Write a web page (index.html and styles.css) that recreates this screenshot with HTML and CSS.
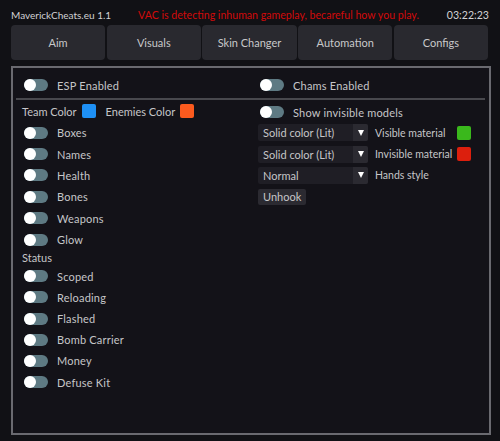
FILE: index.html
```html
<!DOCTYPE html>
<html>
<head>
<meta charset="utf-8">
<link rel="stylesheet" href="styles.css">
</head>
<body>
<div class="app">
  <div class="top">
    <span class="title">MaverickCheats.eu 1.1</span>
    <span class="warn">VAC is detecting inhuman gameplay, becareful how you play.</span>
    <span class="time">03:22:23</span>
  </div>
  <div class="tabs">
    <div class="tab">Aim</div>
    <div class="tab">Visuals</div>
    <div class="tab">Skin Changer</div>
    <div class="tab">Automation</div>
    <div class="tab">Configs</div>
  </div>
  <div class="panel">
    <div class="col left">
      <div class="head"><span class="toggle"></span><span class="lbl">ESP Enabled</span></div>
      <div class="sep"></div>
      <div class="colors">
        <span>Team Color</span><span class="sw blue"></span>
        <span class="gap">Enemies Color</span><span class="sw orange"></span>
      </div>
      <div class="row"><span class="toggle"></span><span class="lbl">Boxes</span></div>
      <div class="row"><span class="toggle"></span><span class="lbl">Names</span></div>
      <div class="row"><span class="toggle"></span><span class="lbl">Health</span></div>
      <div class="row"><span class="toggle"></span><span class="lbl">Bones</span></div>
      <div class="row"><span class="toggle"></span><span class="lbl">Weapons</span></div>
      <div class="row"><span class="toggle"></span><span class="lbl">Glow</span></div>
      <div class="section">Status</div>
      <div class="row tight"><span class="toggle"></span><span class="lbl">Scoped</span></div>
      <div class="row tight"><span class="toggle"></span><span class="lbl">Reloading</span></div>
      <div class="row tight"><span class="toggle"></span><span class="lbl">Flashed</span></div>
      <div class="row tight"><span class="toggle"></span><span class="lbl">Bomb Carrier</span></div>
      <div class="row tight"><span class="toggle"></span><span class="lbl">Money</span></div>
      <div class="row tight"><span class="toggle"></span><span class="lbl">Defuse Kit</span></div>
    </div>
    <div class="col right">
      <div class="head"><span class="toggle"></span><span class="lbl">Chams Enabled</span></div>
      <div class="sep"></div>
      <div class="row first"><span class="toggle"></span><span class="lbl">Show invisible models</span></div>
      <div class="row drow">
        <div class="select"><span class="val">Solid color (Lit)</span><span class="arrow"><i class="tri"></i></span></div>
        <span class="dlbl">Visible material</span><span class="sw mat green"></span>
      </div>
      <div class="row drow">
        <div class="select"><span class="val">Solid color (Lit)</span><span class="arrow"><i class="tri"></i></span></div>
        <span class="dlbl">Invisible material</span><span class="sw mat red"></span>
      </div>
      <div class="row drow">
        <div class="select"><span class="val">Normal</span><span class="arrow"><i class="tri"></i></span></div>
        <span class="dlbl">Hands style</span>
      </div>
      <div class="row drow">
        <span class="btn">Unhook</span>
      </div>
    </div>
  </div>
</div>
</body>
</html>
```
FILE: styles.css
```css
html, body {
  margin: 0;
  padding: 0;
}
body {
  width: 500px;
  height: 441px;
  overflow: hidden;
  background: #111115;
  font-family: "Lato", "Noto Sans", sans-serif;
  font-size: 11px;
  color: #c6c6c8;
}
.app {
  padding: 0 9px 0 11px;
}
.top {
  height: 25px;
  box-sizing: border-box;
  padding-top: 4px;
  display: flex;
  align-items: center;
}
.title {
  color: #d2d2d4;
  font-size: 10px;
}
.warn {
  color: #d10a0a;
  font-size: 10.6px;
  margin-left: 27px;
}
.time {
  margin-left: auto;
  margin-right: 2px;
  color: #d2d2d4;
  font-size: 10.6px;
}
.tabs {
  display: flex;
  gap: 1.5px;
  height: 35px;
  width: 477px;
}
.tab {
  flex: 1;
  background: #29292f;
  border-radius: 4px;
  display: flex;
  align-items: center;
  justify-content: center;
  color: #c8c8ca;
}
.panel {
  margin-top: 6px;
  width: 480px;
  height: 369px;
  box-sizing: border-box;
  border: 2px solid #6a6a70;
  background: #131218;
  display: grid;
  grid-template-columns: 238px 1fr;
}
.head {
  height: 30px;
  box-sizing: border-box;
  padding-top: 4px;
  display: flex;
  align-items: center;
}
.left .head { padding-left: 11px; }
.right .head { padding-left: 9px; }
.sep {
  height: 2px;
  background: #48484d;
}
.left .sep { margin-left: 3px; }
.right .sep { margin-right: 4px; }
.toggle {
  display: inline-block;
  width: 24px;
  height: 12px;
  border-radius: 6px;
  background: #5e7a83;
  position: relative;
  flex: none;
}
.toggle::before {
  content: "";
  position: absolute;
  left: 0;
  top: 0;
  width: 12px;
  height: 12px;
  border-radius: 50%;
  background: #ffffff;
}
.lbl {
  margin-left: 9px;
  letter-spacing: 0.2px;
  white-space: nowrap;
}
.colors {
  height: 22px;
  display: flex;
  align-items: center;
  padding-left: 9px;
}
.sw {
  display: inline-block;
  width: 14px;
  height: 14px;
  border-radius: 2px;
  margin-left: 5px;
  flex: none;
}
.sw.mat { margin-left: 2px; }
.gap { margin-left: 10px; }
.blue { background: #1e90f5; }
.orange { background: #fb5a1e; }
.green { background: #3ab81c; }
.red { background: #dc1f0d; }
.row {
  height: 21.4px;
  display: flex;
  align-items: center;
  padding-left: 11px;
}
.row.tight { height: 21.2px; }
.section {
  height: 15.2px;
  display: flex;
  align-items: center;
  padding-left: 9px;
}
.right .row { padding-left: 9px; }
.right .row.first {
  height: 22px;
  padding-top: 2px;
  box-sizing: border-box;
}
.right .row.drow { padding-left: 7px; }
.select {
  width: 110px;
  height: 17px;
  display: flex;
  flex: none;
  background: #1f1e25;
  border-radius: 2px;
  overflow: hidden;
}
.val {
  flex: 1;
  padding-left: 5px;
  display: flex;
  align-items: center;
  white-space: nowrap;
}
.arrow {
  width: 15px;
  background: #2b2a31;
  display: flex;
  align-items: center;
  justify-content: center;
}
.tri {
  display: block;
  width: 0;
  height: 0;
  border-left: 3.5px solid transparent;
  border-right: 3.5px solid transparent;
  border-top: 6px solid #ffffff;
}
.dlbl {
  margin-left: 7px;
  width: 80px;
  flex: none;
  font-size: 10.5px;
  white-space: nowrap;
}
.btn {
  background: #2b2a31;
  height: 16px;
  padding: 0 5px;
  border-radius: 2px;
  display: flex;
  align-items: center;
}
```
